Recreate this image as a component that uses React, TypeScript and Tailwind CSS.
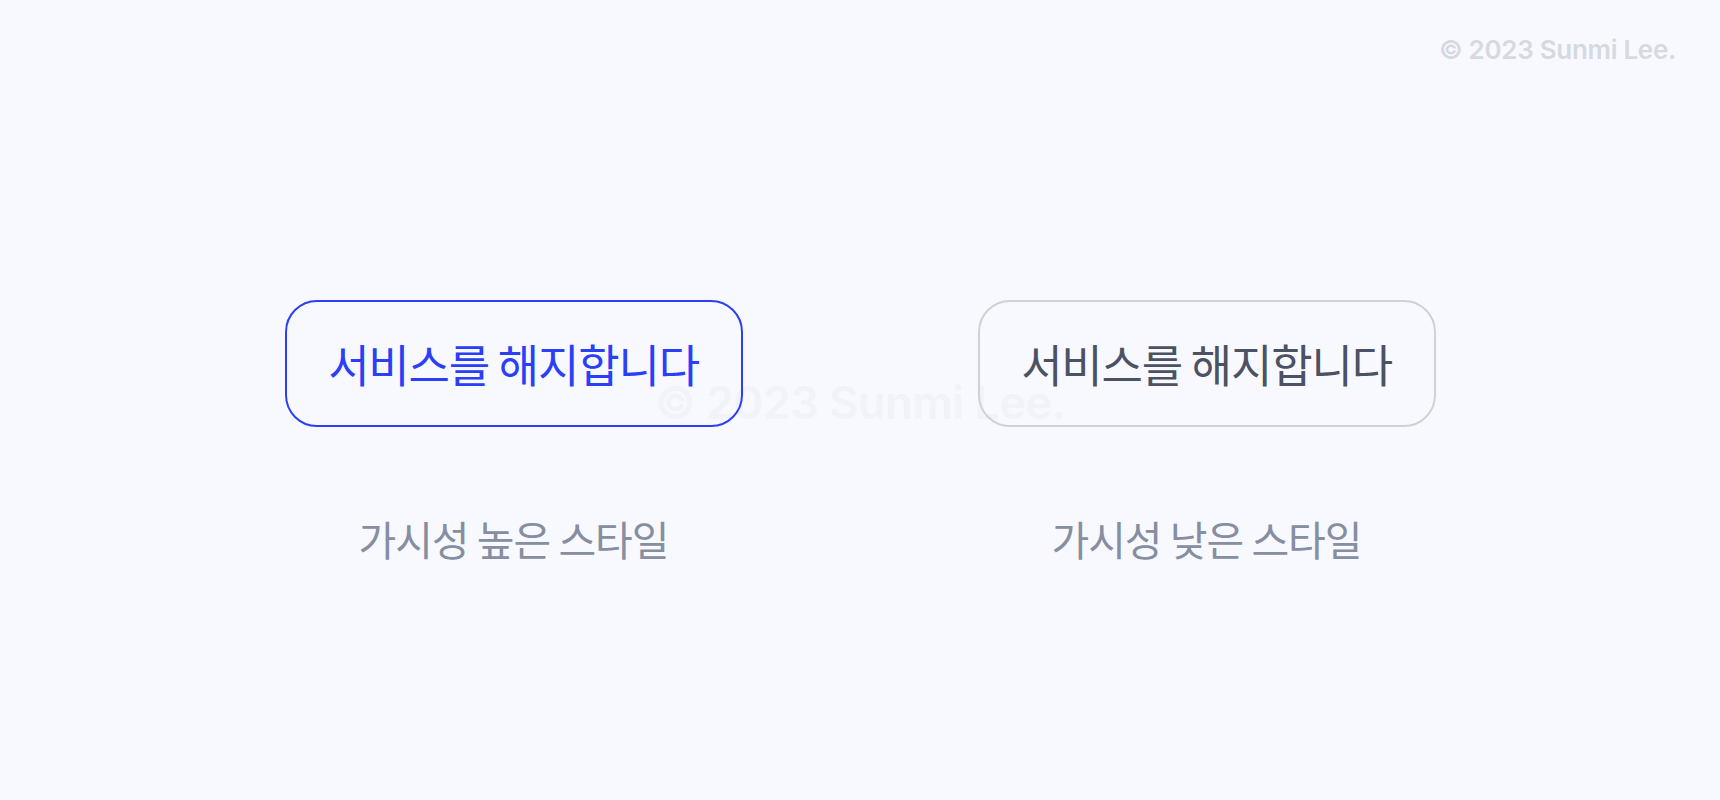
function Option({ variant, label }: { variant: 'high' | 'low'; label: string }) {
  const btn =
    variant === 'high'
      ? 'border-[#2a3ff7] text-[#2a3ff7]'
      : 'border-[#ccd1da] text-[#4b5263]'
  return (
    <div className="flex flex-col items-center gap-[91px]">
      <button
        type="button"
        className={`w-[458px] h-[127px] rounded-[32px] border-2 bg-transparent flex items-center justify-center font-['Noto_Sans_CJK_KR','Noto_Sans',sans-serif] text-[45px] tracking-[-1.2px] ${btn}`}
      >
        서비스를 해지합니다
      </button>
      <p className="font-['Noto_Sans_CJK_KR','Noto_Sans',sans-serif] text-[41px] tracking-[-1px] text-[#868fa1] leading-none">
        {label}
      </p>
    </div>
  )
}

export default function App() {
  return (
    <div className="relative w-[1720px] h-[800px] bg-[#f8f9fe] overflow-hidden">
      <div className="absolute left-0 right-0 top-[369px] text-center font-['Inter','Noto_Sans',sans-serif] text-[45px] font-semibold tracking-[-0.5px] text-[#f1f3f8] select-none">
        © 2023 Sunmi Lee.
      </div>
      <div className="absolute right-[44px] top-[30px] font-['Inter','Noto_Sans',sans-serif] text-[26px] font-semibold tracking-[-0.3px] text-[#d5d9e1]">
        © 2023 Sunmi Lee.
      </div>
      <div className="relative flex justify-center gap-[235px] pt-[300px]">
        <Option variant="high" label="가시성 높은 스타일" />
        <Option variant="low" label="가시성 낮은 스타일" />
      </div>
    </div>
  )
}
